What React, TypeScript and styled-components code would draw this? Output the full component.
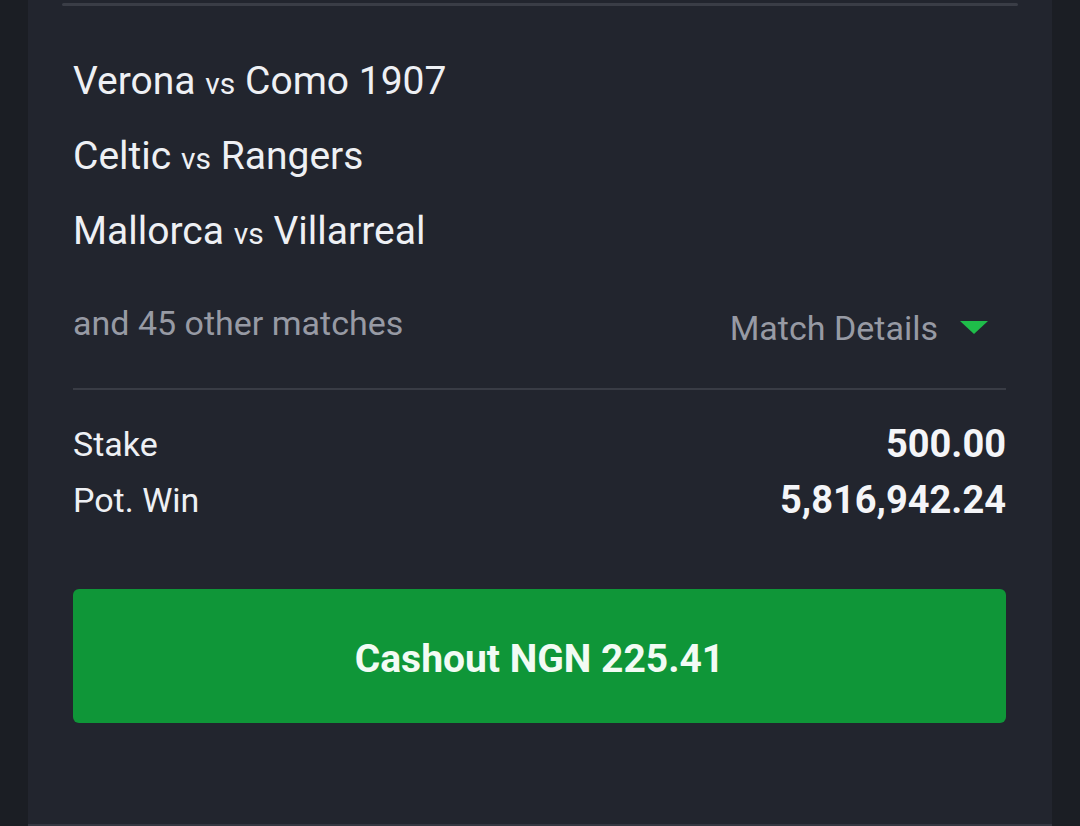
import React from "react";
import styled, { createGlobalStyle } from "styled-components";

const GlobalStyle = createGlobalStyle`
  html, body {
    margin: 0;
    padding: 0;
    background: #1b1e24;
    font-family: Roboto, "Noto Sans", sans-serif;
  }
`;

interface Match {
  home: string;
  away: string;
}

const matches: Match[] = [
  { home: "Verona", away: "Como 1907" },
  { home: "Celtic", away: "Rangers" },
  { home: "Mallorca", away: "Villarreal" },
];

const App: React.FC = () => {
  return (
    <>
      <GlobalStyle />
      <Page>
        <Card>
          <TopRule />
          <Body>
            <MatchList>
              {matches.map((m) => (
                <MatchRow key={m.home}>
                  {m.home} <Vs>vs</Vs> {m.away}
                </MatchRow>
              ))}
            </MatchList>
            <MoreRow>
              <MoreText>and 45 other matches</MoreText>
              <DetailsToggle>
                Match Details
                <svg width="28" height="14" viewBox="0 0 28 14">
                  <polygon points="0,0 28,0 14,13" fill="#1fbd4a" />
                </svg>
              </DetailsToggle>
            </MoreRow>
            <Divider />
            <Summary>
              <SummaryRow>
                <Label>Stake</Label>
                <Value>500.00</Value>
              </SummaryRow>
              <SummaryRow>
                <Label>Pot. Win</Label>
                <Value>5,816,942.24</Value>
              </SummaryRow>
            </Summary>
            <CashoutButton type="button">Cashout NGN 225.41</CashoutButton>
          </Body>
        </Card>
      </Page>
    </>
  );
};

export default App;

const Page = styled.div`
  height: 826px;
  padding: 0 28px;
  box-sizing: border-box;
  overflow: hidden;
`;

const Card = styled.div`
  height: 826px;
  box-sizing: border-box;
  background: #22252e;
  border-bottom: 2px solid #343741;
  padding-top: 3px;
`;

const TopRule = styled.div`
  height: 3px;
  margin: 0 34px;
  background: #3a3d46;
  border-radius: 2px;
`;

const Body = styled.div`
  padding: 0 46px 0 45px;
  display: flex;
  flex-direction: column;
`;

const MatchList = styled.div`
  display: flex;
  flex-direction: column;
  padding-top: 53px;
  gap: 31px;
`;

const MatchRow = styled.div`
  height: 44px;
  display: flex;
  align-items: baseline;
  gap: 0.25em;
  color: #eef0f4;
  font-size: 39px;
  line-height: 44px;
  white-space: nowrap;
`;

const Vs = styled.span`
  font-size: 30px;
  line-height: 1;
`;

const MoreRow = styled.div`
  display: flex;
  justify-content: space-between;
  align-items: flex-start;
  margin-top: 51px;
  padding-right: 18px;
`;

const MoreText = styled.span`
  color: #979aa4;
  font-size: 34px;
  line-height: 38px;
`;

const DetailsToggle = styled.span`
  display: flex;
  align-items: center;
  gap: 22px;
  margin-top: 5px;
  color: #979aa4;
  font-size: 34px;
  line-height: 38px;
`;

const Divider = styled.div`
  height: 2px;
  background: #393c45;
  margin-top: 41px;
`;

const Summary = styled.div`
  display: flex;
  flex-direction: column;
  gap: 14px;
  margin-top: 33px;
`;

const SummaryRow = styled.div`
  display: flex;
  justify-content: space-between;
  align-items: center;
  height: 42px;
`;

const Label = styled.span`
  color: #eef0f4;
  font-size: 34px;
`;

const Value = styled.span`
  color: #f4f5f8;
  font-size: 38px;
  font-weight: 700;
`;

const CashoutButton = styled.button`
  margin-top: 68px;
  height: 134px;
  padding: 6px 0 0;
  border: none;
  border-radius: 6px;
  background: #0f9638;
  color: #f2fbf4;
  font-family: Roboto, "Noto Sans", sans-serif;
  font-size: 39px;
  font-weight: 700;
  cursor: pointer;
`;
